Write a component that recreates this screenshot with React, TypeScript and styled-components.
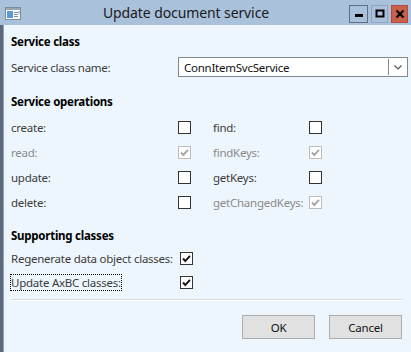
import styled, { createGlobalStyle } from 'styled-components';

const GlobalStyle = createGlobalStyle`
    html, body {
        margin: 0;
        padding: 0;
        background: #eef6fd;
    }
    body {
        font-family: 'Noto Sans', 'Open Sans', sans-serif;
        font-size: 11.5px;
        letter-spacing: -0.25px;
    }
`;

const operations = [
    { left: 'create:', leftState: 'off', right: 'find:', rightState: 'off' },
    { left: 'read:', leftState: 'disabled', right: 'findKeys:', rightState: 'disabled' },
    { left: 'update:', leftState: 'off', right: 'getKeys:', rightState: 'off' },
    { left: 'delete:', leftState: 'off', right: 'getChangedKeys:', rightState: 'disabled' },
];

type BoxState = 'off' | 'on' | 'disabled';

const CheckBox = ({ state }: { state: BoxState }) => (
    <Box $disabled={state === 'disabled'}>
        {state !== 'off' && (
            <svg width="11" height="11" viewBox="0 0 11 11">
                <path
                    d="M2 5.5 L4.3 8 L9 2.8"
                    fill="none"
                    stroke={state === 'disabled' ? '#a9a9a9' : '#1a1a1a'}
                    strokeWidth="2"
                />
            </svg>
        )}
    </Box>
);

const App = () => {
    return (
        <>
            <GlobalStyle />
            <Window>
                <TitleBar>
                    <AppIcon width="16" height="13" viewBox="0 0 16 13">
                        <rect x="0.5" y="0.5" width="15" height="12" fill="#fff" stroke="#7d8a99" />
                        <rect x="1" y="1" width="14" height="2" fill="#9aa6b4" />
                        <rect x="2" y="4" width="6" height="7" fill="#5b9bd5" />
                        <rect x="9" y="5" width="4" height="1" fill="#7d8a99" />
                        <rect x="9" y="7" width="4" height="1" fill="#7d8a99" />
                        <rect x="9" y="9" width="4" height="1" fill="#7d8a99" />
                        <rect x="13.5" y="4" width="1" height="3" fill="#5b9bd5" />
                    </AppIcon>
                    <Title>Update document service</Title>
                    <Controls>
                        <CtrlButton $kind="min">
                            <svg width="10" height="10" viewBox="0 0 10 10">
                                <rect x="1" y="5" width="8" height="3" fill="#000" />
                            </svg>
                        </CtrlButton>
                        <CtrlButton $kind="max">
                            <svg width="10" height="10" viewBox="0 0 10 10">
                                <rect x="1.5" y="1.5" width="7" height="6" fill="none" stroke="#000" strokeWidth="2" />
                            </svg>
                        </CtrlButton>
                        <CtrlButton $kind="close">
                            <svg width="10" height="10" viewBox="0 0 10 10">
                                <path d="M1.5 1.5 L8.5 8.5 M8.5 1.5 L1.5 8.5" stroke="#000" strokeWidth="2.2" />
                            </svg>
                        </CtrlButton>
                    </Controls>
                </TitleBar>
                <Body>
                    <Heading>Service class</Heading>
                    <FieldRow>
                        <Label>Service class name:</Label>
                        <Combo>
                            <ComboValue>ConnItemSvcService</ComboValue>
                            <ComboArrow>
                                <svg width="8" height="5" viewBox="0 0 8 5">
                                    <path d="M0.5 0.5 L4 4 L7.5 0.5" fill="none" stroke="#555" strokeWidth="1.2" />
                                </svg>
                            </ComboArrow>
                        </Combo>
                    </FieldRow>

                    <Heading $top={15}>Service operations</Heading>
                    <OpsGrid>
                        {operations.map((op) => (
                            <OpRow key={op.left}>
                                <OpLabel $disabled={op.leftState === 'disabled'}>{op.left}</OpLabel>
                                <CheckBox state={op.leftState as BoxState} />
                                <OpLabel $disabled={op.rightState === 'disabled'}>{op.right}</OpLabel>
                                <CheckBox state={op.rightState as BoxState} />
                            </OpRow>
                        ))}
                    </OpsGrid>

                    <Heading $top={11}>Supporting classes</Heading>
                    <SupportRow>
                        <Label>Regenerate data object classes:</Label>
                        <CheckBox state="on" />
                    </SupportRow>
                    <SupportRow>
                        <FocusLabel>Update AxBC classes:</FocusLabel>
                        <CheckBox state="on" />
                    </SupportRow>

                    <Separator />
                    <ButtonRow>
                        <PushButton>OK</PushButton>
                        <PushButton>Cancel</PushButton>
                    </ButtonRow>
                </Body>
            </Window>
        </>
    );
};

export default App;

const Window = styled.div`
    width: 411px;
    height: 352px;
    display: flex;
    flex-direction: column;
    background: #eef6fd;
    overflow: hidden;
`;

const TitleBar = styled.div`
    position: relative;
    height: 25px;
    flex-shrink: 0;
    background: #aac1dc;
    display: flex;
    align-items: center;
    padding-left: 5px;
`;

const AppIcon = styled.svg`
    margin-top: 2px;
`;

const Title = styled.div`
    position: absolute;
    left: 0;
    right: 39px;
    top: 3px;
    text-align: center;
    font-size: 14px;
    letter-spacing: -0.1px;
    color: #1a1a1a;
    pointer-events: none;
`;

const Controls = styled.div`
    margin-left: auto;
    margin-right: 3px;
    display: flex;
    gap: 3px;
    align-self: flex-start;
    margin-top: 5px;
`;

const CtrlButton = styled.div<{ $kind: 'min' | 'max' | 'close' }>`
    width: ${(p) => (p.$kind === 'min' ? 19 : 17)}px;
    height: 18px;
    box-sizing: border-box;
    display: flex;
    align-items: center;
    justify-content: center;
    border: 1px solid
        ${(p) => (p.$kind === 'min' ? '#5f6f84' : p.$kind === 'max' ? '#8ea6c2' : '#b5493b')};
    background: ${(p) => (p.$kind === 'close' ? '#c9604c' : '#aac1dc')};
`;

const Body = styled.div`
    flex: 1;
    display: flex;
    flex-direction: column;
    padding: 7px 4px 0 8px;
    border-left: 3px solid #5d6a7b;
    box-shadow: inset 1px 0 0 #8fa3bb;
`;

const Heading = styled.div<{ $top?: number }>`
    height: 20px;
    line-height: 20px;
    margin-top: ${(p) => p.$top ?? 0}px;
    font-weight: 700;
    color: #000;
`;

const Label = styled.div`
    color: #3b3b3b;
    white-space: nowrap;
`;

const FieldRow = styled.div`
    margin-top: 5px;
    height: 20px;
    display: grid;
    grid-template-columns: 167px 230px;
    align-items: center;
`;

const Combo = styled.div`
    height: 20px;
    box-sizing: border-box;
    border: 1px solid #828790;
    background: #fff;
    display: flex;
    align-items: center;
`;

const ComboValue = styled.div`
    flex: 1;
    padding-left: 5px;
    color: #111;
`;

const ComboArrow = styled.div`
    width: 19px;
    height: 16px;
    box-sizing: border-box;
    border-left: 1px solid #8a8a8a;
    display: flex;
    align-items: center;
    justify-content: center;
`;

const OpsGrid = styled.div`
    margin-top: 3px;
    display: flex;
    flex-direction: column;
`;

const OpRow = styled.div`
    height: 25px;
    display: grid;
    grid-template-columns: 167px 35px 96px 13px;
    align-items: center;
`;

const OpLabel = styled(Label)<{ $disabled?: boolean }>`
    color: ${(p) => (p.$disabled ? '#8a8a8a' : '#3b3b3b')};
`;

const SupportRow = styled.div`
    height: 24px;
    display: grid;
    grid-template-columns: 169px 13px;
    align-items: center;
`;

const FocusLabel = styled(Label)`
    justify-self: start;
    outline: 1px dotted #000;
    outline-offset: 0;
    line-height: 15px;
`;

const Box = styled.div<{ $disabled?: boolean }>`
    width: 13px;
    height: 13px;
    box-sizing: border-box;
    border: 1px solid ${(p) => (p.$disabled ? '#bcbcbc' : '#333')};
    background: #fff;
    display: flex;
    align-items: center;
    justify-content: center;
`;

const Separator = styled.div`
    margin-top: 5px;
    margin-right: 4px;
    height: 1px;
    background: #d6dbe1;
    box-shadow: 0 1px 0 #fff;
`;

const ButtonRow = styled.div`
    margin-top: 15px;
    margin-right: 5px;
    display: flex;
    justify-content: flex-end;
    gap: 14px;
`;

const PushButton = styled.div`
    width: 73px;
    height: 24px;
    box-sizing: border-box;
    border: 1px solid #adadad;
    background: #e1e1e1;
    display: flex;
    align-items: center;
    justify-content: center;
    color: #111;
`;
